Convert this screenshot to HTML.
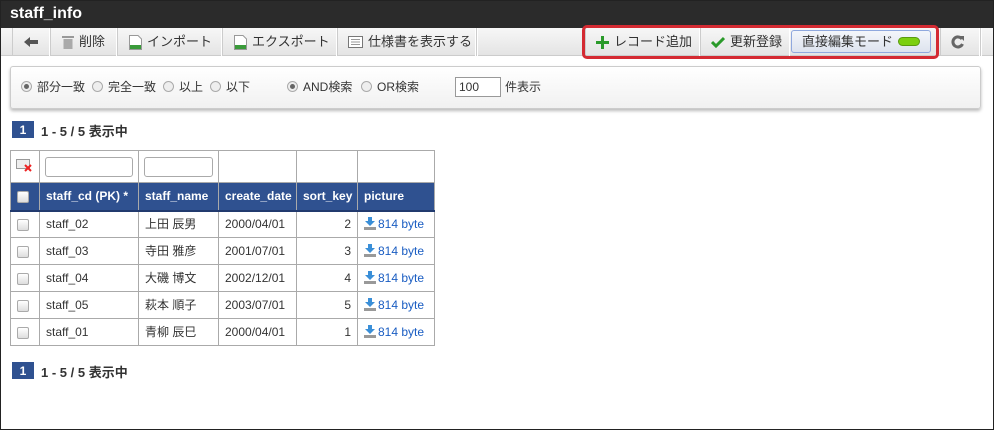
<!DOCTYPE html>
<html><head><meta charset="utf-8"><style>
*{margin:0;padding:0;box-sizing:border-box}
body{width:994px;height:430px;position:relative;background:#fff;font-family:"Liberation Sans","Noto Sans CJK JP",sans-serif;font-size:12px;color:#333;overflow:hidden}
.frame{position:absolute;left:0;top:0;width:994px;height:430px;border:1px solid #222;}
.title{position:absolute;left:0;top:0;width:994px;height:28px;background:#2b2b2b;color:#fff;font-weight:bold;font-size:16px;line-height:28px;padding-left:10px}
.tb{position:absolute;left:1px;top:28px;width:992px;height:28px;background:linear-gradient(#f7f7f7,#e4e4e4);border-bottom:1px solid #ccc}
.b{position:absolute;top:28px;height:28px;line-height:28px;font-size:13px;color:#333;border-left:1px solid #ccc;border-right:1px solid #fff;padding-left:8px;white-space:nowrap;display:flex;align-items:center;gap:5px}
.hl{position:absolute;left:582px;top:25px;width:357px;height:34px;border:3px solid #d42a32;border-radius:5px}
.panel{position:absolute;left:10px;top:66px;width:971px;height:43px;border:1px solid #ccc;border-radius:3px;background:linear-gradient(#fff,#f1f1f1);box-shadow:0 2px 3px #bbb}
.r{position:absolute;top:80px;font-size:12px;line-height:14px;white-space:nowrap}
.rd{display:inline-block;width:11px;height:11px;border:1px solid #aaa;border-radius:50%;background:#eee;vertical-align:-1px;margin-right:5px;position:relative}
.rd.on::after{content:"";position:absolute;left:2px;top:2px;width:5px;height:5px;border-radius:50%;background:#666}
.pg{position:absolute;left:12px;width:22px;height:17px;background:#2f5190;color:#fff;font-weight:bold;font-size:12px;text-align:center;line-height:18px}
.pt{position:absolute;left:41px;font-weight:bold;font-size:13px;color:#333}
table{position:absolute;left:10px;top:150px;border-collapse:collapse;table-layout:fixed;width:425px}
td{border:1px solid #aaa;height:27px;padding:0 6px;font-size:12px;line-height:14px;color:#333;white-space:nowrap;overflow:hidden}
tr.f td{height:32px;padding:0 5px}
tr.h td{background:#2f5190;color:#fff;font-weight:bold;height:28px;border-color:#aaa;border-bottom:2px solid #213a6e}
.cb{display:inline-block;width:12px;height:12px;border:1px solid #aaa;border-radius:2px;background:linear-gradient(#fff,#ddd);vertical-align:middle}
.in{width:88px;height:20px;border:1px solid #aaa;border-radius:3px;background:#fff}
a{color:#1a5dc2;text-decoration:none}
.dl{display:inline-block;width:12px;height:13px;vertical-align:-2px;margin-right:2px}
</style></head><body>
<div class="title">staff_info</div>
<div class="tb"></div>
<div class="b" style="left:12px;width:38px;padding-left:10px"><svg width="16" height="12"><path d="M1 6 L7 1 V4 H15 V8 H7 V11 Z" fill="#555"/></svg></div>
<div class="b" style="left:50px;width:67px;padding-left:11px"><svg width="12" height="14"><rect x="0" y="1" width="12" height="2" fill="#999"/><rect x="1.5" y="4" width="9" height="10" fill="#aaa"/></svg>削除</div>
<div class="b" style="left:117px;width:105px;padding-left:11px"><svg width="13" height="15"><path d="M0.5 0.5H9L12.5 4V14.5H0.5Z" fill="#fff" stroke="#999"/><rect x="1" y="10" width="11" height="4" fill="#3a9b3a"/></svg>インポート</div>
<div class="b" style="left:222px;width:115px;padding-left:11px"><svg width="13" height="15"><path d="M0.5 0.5H9L12.5 4V14.5H0.5Z" fill="#fff" stroke="#999"/><rect x="1" y="10" width="11" height="4" fill="#3a9b3a"/></svg>エクスポート</div>
<div class="b" style="left:337px;width:139px;padding-left:10px"><svg width="15" height="12"><rect x=".5" y=".5" width="14" height="11" fill="#fff" stroke="#777"/><path d="M3 3.5H12M3 6H12M3 8.5H12" stroke="#999"/></svg>仕様書を表示する</div>
<div class="b" style="left:476px;width:1px;padding:0"></div>
<div class="b" style="left:585px;width:115px;padding-left:10px"><svg width="13" height="13"><path d="M5 0H8V5H13V8H8V13H5V8H0V5H5Z" fill="#2a9a2a"/></svg>レコード追加</div>
<div class="b" style="left:700px;width:90px;padding-left:10px"><svg width="14" height="12"><path d="M1 6L5 10L13 2" stroke="#2a9a2a" stroke-width="3" fill="none"/></svg>更新登録</div>
<div class="b" style="left:791px;top:30px;height:23px;line-height:22px;width:140px;border:1px solid #8fa8de;border-radius:3px;background:linear-gradient(#f4f6fb,#dde3ee);padding-left:10px">直接編集モード <span style="display:inline-block;width:22px;height:9px;border-radius:5px;background:#7ccf10;border:1px solid #5a9a10"></span></div>
<div class="b" style="left:940px;width:40px;padding-left:10px"><svg width="14" height="14"><path d="M11 4A5 5 0 1 0 11.5 9" stroke="#666" stroke-width="3" fill="none"/><path d="M8 1L13 1L13 6Z" fill="#666"/></svg></div>
<div class="b" style="left:980px;width:1px;padding:0"></div>
<div class="hl"></div>
<div class="panel"></div>
<div class="r" style="left:21px"><span class="rd on"></span>部分一致</div>
<div class="r" style="left:92px"><span class="rd"></span>完全一致</div>
<div class="r" style="left:163px"><span class="rd"></span>以上</div>
<div class="r" style="left:210px"><span class="rd"></span>以下</div>
<div class="r" style="left:287px"><span class="rd on"></span>AND検索</div>
<div class="r" style="left:361px"><span class="rd"></span>OR検索</div>
<div style="position:absolute;left:455px;top:77px;width:46px;height:20px;border:1px solid #999;background:#fff;font-size:12px;line-height:18px;padding-left:3px">100</div>
<div class="r" style="left:505px">件表示</div>
<div class="pg" style="top:121px">1</div><div class="pt" style="top:121px">1 - 5 / 5 表示中</div>
<table>
<colgroup><col style="width:29px"><col style="width:99px"><col style="width:80px"><col style="width:78px"><col style="width:61px"><col style="width:77px"></colgroup>
<tr class="f"><td><svg width="17" height="13"><rect x=".5" y=".5" width="13" height="9" fill="#eee" stroke="#999"/><path d="M9 6L15 12M15 6L9 12" stroke="#e22" stroke-width="2"/></svg></td><td><div class="in"></div></td><td><div class="in" style="width:69px"></div></td><td></td><td></td><td></td></tr>
<tr class="h"><td><span class="cb"></span></td><td>staff_cd (PK) *</td><td>staff_name</td><td>create_date</td><td>sort_key</td><td>picture</td></tr>
<tr><td><span class="cb"></span></td><td>staff_02</td><td>上田 辰男</td><td>2000/04/01</td><td style="text-align:right">2</td><td><a><svg class="dl"><path d="M4 0H8V4H11L6 9L1 4H4Z" fill="#3a8fd8"/><rect x="0" y="10" width="12" height="3" fill="#999"/></svg>814 byte</a></td></tr>
<tr><td><span class="cb"></span></td><td>staff_03</td><td>寺田 雅彦</td><td>2001/07/01</td><td style="text-align:right">3</td><td><a><svg class="dl"><path d="M4 0H8V4H11L6 9L1 4H4Z" fill="#3a8fd8"/><rect x="0" y="10" width="12" height="3" fill="#999"/></svg>814 byte</a></td></tr>
<tr><td><span class="cb"></span></td><td>staff_04</td><td>大磯 博文</td><td>2002/12/01</td><td style="text-align:right">4</td><td><a><svg class="dl"><path d="M4 0H8V4H11L6 9L1 4H4Z" fill="#3a8fd8"/><rect x="0" y="10" width="12" height="3" fill="#999"/></svg>814 byte</a></td></tr>
<tr><td><span class="cb"></span></td><td>staff_05</td><td>萩本 順子</td><td>2003/07/01</td><td style="text-align:right">5</td><td><a><svg class="dl"><path d="M4 0H8V4H11L6 9L1 4H4Z" fill="#3a8fd8"/><rect x="0" y="10" width="12" height="3" fill="#999"/></svg>814 byte</a></td></tr>
<tr><td><span class="cb"></span></td><td>staff_01</td><td>青柳 辰巳</td><td>2000/04/01</td><td style="text-align:right">1</td><td><a><svg class="dl"><path d="M4 0H8V4H11L6 9L1 4H4Z" fill="#3a8fd8"/><rect x="0" y="10" width="12" height="3" fill="#999"/></svg>814 byte</a></td></tr>
</table>
<div class="pg" style="top:362px">1</div><div class="pt" style="top:362px">1 - 5 / 5 表示中</div>
<div class="frame"></div>
</body></html>
